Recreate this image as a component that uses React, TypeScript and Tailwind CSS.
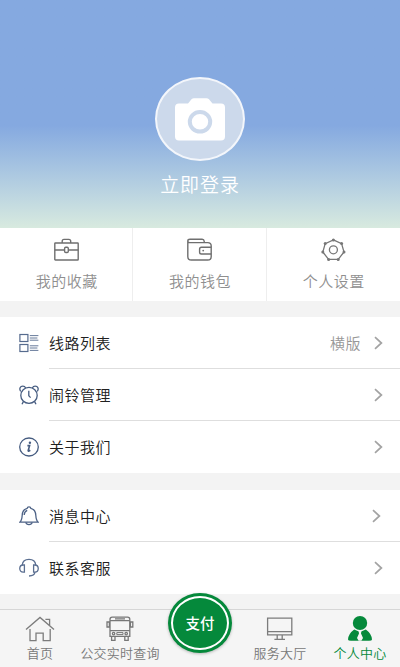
import React from 'react';

type IconProps = { className?: string };

function CameraIcon() {
  return (
    <svg width="50" height="43" viewBox="0 0 50 43">
      <path
        d="M4 5.5H13L16.5 1.2Q17.5 .3 19 .3H31.5Q33 .3 34 1.2L37.5 5.5H46Q50 5.5 50 9.5V38.5Q50 42.5 46 42.5H4Q0 42.5 0 38.5V9.5Q0 5.5 4 5.5Z"
        fill="#fff"
      />
      <ellipse cx="25" cy="23.8" rx="10.2" ry="9.8" fill="#fff" stroke="#ccd9eb" strokeWidth="4" />
    </svg>
  );
}

function BriefcaseIcon() {
  return (
    <svg width="26" height="24" viewBox="0 0 26 24" fill="none" stroke="#6f6f6f" strokeWidth="1.4">
      <rect x="1.8" y="5" width="23.4" height="17" rx=".6" />
      <path d="M9.2 5V3.2Q9.2 1.4 11 1.4H15.8Q17.7 1.4 17.7 3.2V5M1.8 12H11.4M15.4 12H25.2" />
      <rect x="11.6" y="9.3" width="3.7" height="5.2" rx="1.2" />
    </svg>
  );
}

function WalletIcon() {
  return (
    <svg width="26" height="24" viewBox="0 0 26 24" fill="none" stroke="#6f6f6f" strokeWidth="1.4">
      <path d="M1.8 3.2V18.4Q1.8 22 5.4 22H21.6Q25.2 22 25.2 18.4V8Q25.2 4.6 21.8 4.6H3.8Q1.8 4.6 1.8 3Q1.8 1.2 4 1.2H16.2Q18 1.2 18.2 3.2V4.4" />
      <path d="M25.2 9.2H15.4Q13.6 9.2 13.6 11V14.2Q13.6 16 15.4 16H25.2" />
      <circle cx="17.2" cy="12.6" r=".9" fill="#6f6f6f" stroke="none" />
    </svg>
  );
}

function SettingsIcon() {
  return (
    <svg width="26" height="24" viewBox="0 0 26 24" fill="none" stroke="#777" strokeWidth="1.3">
      <path d="M13.4 1.9L21.6 5.6L24 14L18.2 21.4H8.6L2.8 14L5.2 5.6Z" />
      <circle cx="13.4" cy="11.8" r="4" />
      <g fill="#777" stroke="none">
        <circle cx="13.4" cy="1.9" r="1.5" />
        <circle cx="21.6" cy="5.6" r="1.5" />
        <circle cx="24" cy="14" r="1.5" />
        <circle cx="18.2" cy="21.4" r="1.5" />
        <circle cx="8.6" cy="21.4" r="1.5" />
        <circle cx="2.8" cy="14" r="1.5" />
        <circle cx="5.2" cy="5.6" r="1.5" />
      </g>
    </svg>
  );
}

function ListIcon() {
  return (
    <svg width="20" height="20" viewBox="0 0 20 20" fill="none" stroke="#566b8e" strokeWidth="1.2">
      <rect x=".9" y="1.5" width="8" height="7" />
      <rect x=".9" y="11.5" width="8" height="7" />
      <path d="M10.8 2.6H19.4M10.8 7.2H19.4M10.8 12.8H19.4M10.8 17.4H19.4M10.8 5H18.4M10.8 15H18.4" strokeWidth=".9" />
    </svg>
  );
}

function AlarmIcon() {
  return (
    <svg width="20" height="20" viewBox="0 0 20 20" fill="none" stroke="#465c80" strokeWidth="1.3">
      <ellipse cx="10" cy="10.4" rx="8.2" ry="8" />
      <path d="M1.7 6.4C-.1 3.8 1.2 1.1 3.8 1.1C5.3 1.1 6.2 1.9 6.6 2.9M18.3 6.4C20.1 3.8 18.8 1.1 16.2 1.1C14.7 1.1 13.8 1.9 13.4 2.9" />
      <path d="M9.8 5.8V10.8L11.6 12.6M4.4 16.6L3 19.2M15.6 16.6L17 19.2" />
    </svg>
  );
}

function InfoIcon() {
  return (
    <svg width="20" height="20" viewBox="0 0 20 20" fill="none" stroke="#465c80">
      <ellipse cx="10" cy="10" rx="9.3" ry="9" strokeWidth="1.3" />
      <path d="M8.4 8.6H10.6L9.2 13.5Q9.1 14.3 10 14L11.3 13.2" strokeWidth="1.6" />
      <circle cx="10.9" cy="5.7" r="1.2" fill="#465c80" stroke="none" />
    </svg>
  );
}

function BellIcon() {
  return (
    <svg width="20" height="20" viewBox="0 0 20 20" fill="none" stroke="#4d6286" strokeWidth="1.3">
      <path d="M.8 16.2C2.9 14.6 3 12.6 3.2 9.2C3.4 5.2 5.4 3 8.2 2.3C8.3 .5 11.7 .5 11.8 2.3C14.6 3 16.6 5.2 16.8 9.2C17 12.6 17.1 14.6 19.2 16.2Z" />
      <path d="M6.8 16.4Q7.4 18.6 10 18.6Q12.6 18.6 13.2 16.4M5.2 9Q5.3 5.6 8.2 4.4" />
    </svg>
  );
}

function HeadsetIcon() {
  return (
    <svg width="20" height="20" viewBox="0 0 20 20" fill="none" stroke="#5b6f91" strokeWidth="1.3">
      <path d="M3.2 7.2C3.6 3.4 6.2 1.4 10 1.4C13.8 1.4 16.4 3.4 16.8 7.2" />
      <path d="M5.4 7V14.2H4.2C-.4 14.2 -.4 7 4.2 7ZM14.6 7V14.2H15.8C20.4 14.2 20.4 7 15.8 7Z" />
      <path d="M16 14.2C15.6 16.6 13.8 18 10 18" />
    </svg>
  );
}

function ChevronIcon({ className }: IconProps) {
  return (
    <svg className={className} width="9" height="14" viewBox="0 0 9 14" fill="none" stroke="#a3a3a3" strokeWidth="1.7">
      <path d="M1 1.2L7.4 7L1 12.8" />
    </svg>
  );
}

function HomeIcon() {
  return (
    <svg width="30" height="26" viewBox="0 0 30 26" fill="none" stroke="#7c7c7c" strokeWidth="1.3">
      <path d="M1 13.4L15 1.4L29 13.4M5 13V24.6H11V17.2H18.2V24.6H25.2V13M20.4 3.4H24.6V9.4" />
    </svg>
  );
}

function BusIcon() {
  return (
    <svg width="30" height="26" viewBox="0 0 30 26" fill="none" stroke="#777" strokeWidth="1.3">
      <path d="M5 20.4V3.4Q5 1.2 7.2 1.2H22.6Q24.8 1.2 24.8 3.4V20.4Z" />
      <path d="M5 4.6H24.8M5 14.6H24.8M10 2.8H20" />
      <path d="M4.4 6H2V11H4.4ZM25.4 6H27.8V11H25.4Z" />
      <path d="M6.6 20.4V24.4H10V20.4M19.8 20.4V24.4H23.2V20.4" />
      <circle cx="8.6" cy="17.6" r="1.2" />
      <circle cx="21.2" cy="17.6" r="1.2" />
      <path d="M11.8 16.6H18V18.6H11.8Z" strokeWidth="1" />
    </svg>
  );
}

function MonitorIcon() {
  return (
    <svg width="30" height="26" viewBox="0 0 30 26" fill="none" stroke="#7c7c7c" strokeWidth="1.3">
      <path d="M2.6 2.2H26.8V18.8H2.6ZM2.6 15.6H26.8M12.2 18.8V22.8M17.2 18.8V22.8M9.4 23.4H20" />
    </svg>
  );
}

function PersonIcon() {
  return (
    <svg width="26" height="27" viewBox="0 0 26 27">
      <ellipse cx="13" cy="8" rx="7.2" ry="7" fill="#05893b" />
      <path d="M7.2 14.6Q1.6 18.6 1 24.4Q1 25.8 4 25.8H22Q25 25.8 25 24.4Q24.4 18.6 18.8 14.6L13 17Z" fill="#05893b" />
      <path d="M11.6 16H14.4L14 18.4L16 23L14.4 25.8H11.6L10 23L12 18.4Z" fill="#f5f5f5" />
    </svg>
  );
}

const shortcuts = [
  { label: '我的收藏', icon: <BriefcaseIcon /> },
  { label: '我的钱包', icon: <WalletIcon /> },
  { label: '个人设置', icon: <SettingsIcon /> },
];

interface RowProps {
  icon: React.ReactNode;
  label: string;
  value?: string;
  last?: boolean;
  chevronClass?: string;
}

function Row({ icon, label, value, last, chevronClass = 'mr-[17px]' }: RowProps) {
  return (
    <div className="flex h-[52px] pl-[19px]">
      <div className="flex w-[30px] shrink-0 items-center">{icon}</div>
      <div className={`flex flex-1 items-center ${last ? '' : 'border-b border-[#dedede]'}`}>
        <span className="flex-1 pt-px text-[15px] tracking-[0.5px] text-[#202020]">{label}</span>
        {value && (
          <span className="mr-[13px] pt-px text-[15px] tracking-[0.5px] text-[#989898]">{value}</span>
        )}
        <ChevronIcon className={chevronClass} />
      </div>
    </div>
  );
}

function Tab({ icon, label, active }: { icon: React.ReactNode; label: string; active?: boolean }) {
  return (
    <div className="flex flex-col items-center pt-[5px]">
      <div className="flex h-[27px] items-center">{icon}</div>
      <span
        className={`mt-px text-[13px] leading-[20px] tracking-[0.2px] whitespace-nowrap ${active ? 'text-[#05893b]' : 'text-[#787878]'}`}
      >
        {label}
      </span>
    </div>
  );
}

export default function App() {
  return (
    <div className="flex h-[667px] w-[400px] flex-col overflow-hidden bg-[#f3f3f3] font-['Noto_Sans_CJK_SC',sans-serif] font-[350]">
      <header className="flex h-[228px] shrink-0 flex-col items-center bg-linear-to-b from-[#85a9e0] from-55% to-[#d8eadf] pt-[77px]">
        <div className="flex h-[84px] w-[90px] items-center justify-center rounded-[50%] border-2 border-[#f3f6fb] bg-[#ccd9eb]">
          <CameraIcon />
        </div>
        <span className="mt-[9px] text-[19px] leading-[28px] tracking-[0.9px] text-white">立即登录</span>
      </header>

      <div className="grid h-[73px] shrink-0 grid-cols-3 bg-white">
        {shortcuts.map((item, i) => (
          <div
            key={item.label}
            className={`flex flex-col items-center pt-[10px] ${i < 2 ? 'border-r border-[#eeeeee]' : ''}`}
          >
            {item.icon}
            <span className="mt-[8px] pl-px text-[15px] leading-[22px] tracking-[0.5px] text-[#8f8f8f]">
              {item.label}
            </span>
          </div>
        ))}
      </div>

      <div className="mt-4 bg-white">
        <Row icon={<ListIcon />} label="线路列表" value="横版" />
        <Row icon={<AlarmIcon />} label="闹铃管理" />
        <Row icon={<InfoIcon />} label="关于我们" last />
      </div>

      <div className="mt-[17px] bg-white">
        <Row icon={<BellIcon />} label="消息中心" chevronClass="mr-[19px]" />
        <Row icon={<HeadsetIcon />} label="联系客服" last />
      </div>

      <nav className="relative mt-auto grid h-[58px] shrink-0 grid-cols-5 border-t border-[#d6d6d6] bg-[#f5f5f5]">
        <Tab icon={<HomeIcon />} label="首页" />
        <Tab icon={<BusIcon />} label="公交实时查询" />
        <div />
        <Tab icon={<MonitorIcon />} label="服务大厅" />
        <Tab icon={<PersonIcon />} label="个人中心" active />
        <button className="absolute -top-[17px] left-[168px] flex h-[60px] w-[64px] items-center justify-center rounded-[50%] bg-[#05893b] p-[3px] shadow-[0_1px_3px_rgba(0,0,0,0.25)]">
          <span className="flex h-full w-full items-center justify-center rounded-[50%] border-2 border-white text-[14.5px] font-medium text-white">
            支付
          </span>
        </button>
      </nav>
    </div>
  );
}
